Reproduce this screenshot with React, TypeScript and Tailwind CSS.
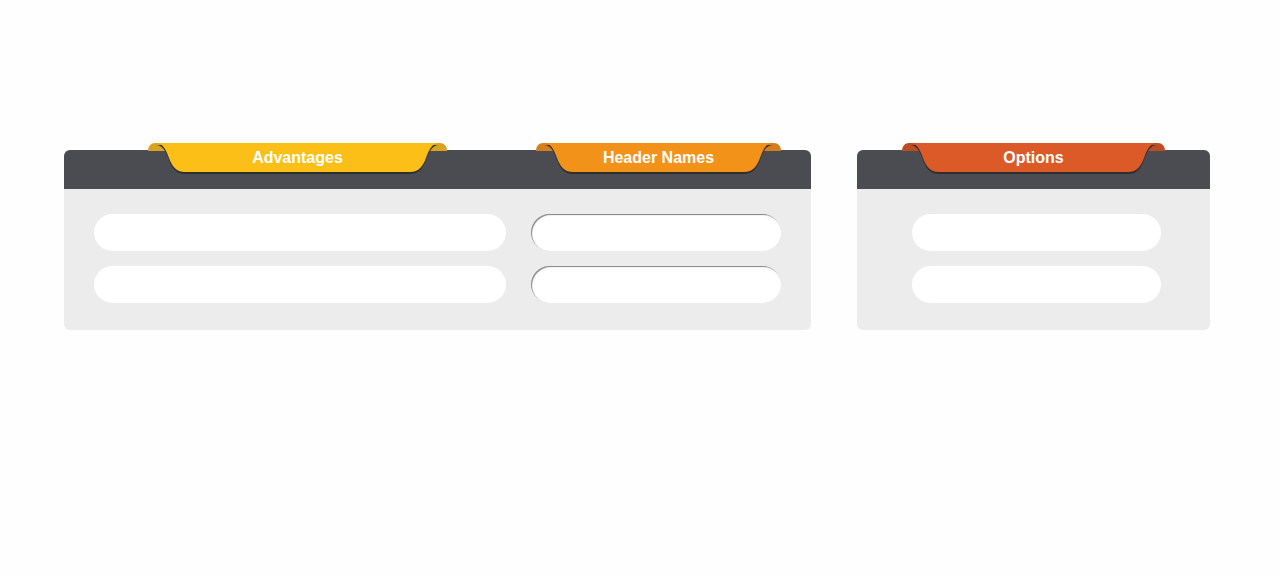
type TabProps = {
  label: string;
  width: number;
  left: number;
  color: string;
  ear: string;
};

const Tab = ({ label, width, left, color, ear }: TabProps) => {
  const W = width;
  const main = `M8,0 C15,0 18,7 21,15 C24,23 28,29 37,29 L${W - 37},29 C${W - 28},29 ${W - 24},23 ${W - 21},15 C${W - 18},7 ${W - 15},0 ${W - 8},0 Z`;
  return (
    <div className="absolute top-[-7px]" style={{ left, width }}>
      <svg width={W} height={34} viewBox={`0 0 ${W} 34`} className="block">
        <path d={`M0,8 C0,3 3,0 7,0 L${W - 7},0 C${W - 3},0 ${W},3 ${W},8 Z`} fill={ear} />
        <path d={main} fill="#2f2f31" transform="translate(0,2)" />
        <path d={main} fill={color} />
      </svg>
      <span className="absolute inset-x-0 top-0 flex h-[30px] items-center justify-center font-['Liberation_Sans',Arial,sans-serif] text-[16px] font-bold text-white">
        {label}
      </span>
    </div>
  );
};

const Field = ({ inset, className }: { inset?: boolean; className: string }) => (
  <div
    className={`h-[37px] rounded-full bg-white ${
      inset ? "shadow-[inset_1px_1px_1px_rgba(0,0,0,0.5)]" : ""
    } ${className}`}
  />
);

export default function App() {
  return (
    <div className="min-h-[576px] w-full bg-[#fefefe] pt-[150px]">
      <div className="flex items-start gap-[46px] pl-[64px]">
        {/* main panel */}
        <div className="relative w-[747px]">
          <div className="h-[39px] rounded-t-[6px] bg-[#4b4c51]" />
          <Tab label="Advantages" left={84} width={299} color="#fbbf17" ear="#d8a320" />
          <Tab label="Header Names" left={472} width={245} color="#f39219" ear="#d57f1c" />
          <div className="grid grid-cols-[412px_250px] gap-x-[25px] gap-y-[15px] rounded-b-[6px] bg-[#ececec] px-[30px] pt-[25px] pb-[27px]">
            <Field className="w-full" />
            <Field inset className="w-full" />
            <Field className="w-full" />
            <Field inset className="w-full" />
          </div>
        </div>

        {/* options panel */}
        <div className="relative w-[353px]">
          <div className="h-[39px] rounded-t-[6px] bg-[#4b4c51]" />
          <Tab label="Options" left={45} width={263} color="#db5a27" ear="#bd4b23" />
          <div className="flex flex-col gap-[15px] rounded-b-[6px] bg-[#ececec] pt-[25px] pb-[27px] pl-[55px]">
            <Field className="w-[249px]" />
            <Field className="w-[249px]" />
          </div>
        </div>
      </div>
    </div>
  );
}
